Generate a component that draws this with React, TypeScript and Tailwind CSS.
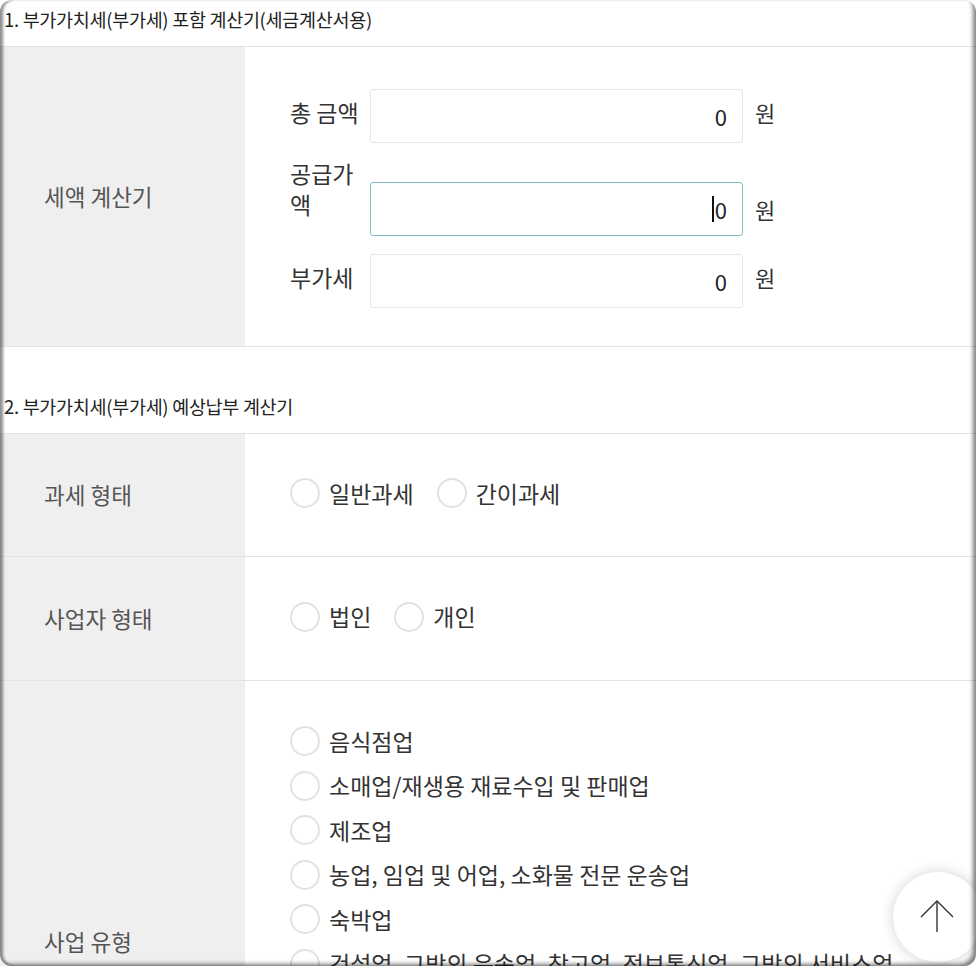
import React from 'react'

const font = { fontFamily: '"Noto Sans CJK KR", "Noto Sans", sans-serif' }

const taxTypes = ['일반과세', '간이과세']
const bizForms = ['법인', '개인']
const industries = [
  '음식점업',
  '소매업/재생용 재료수입 및 판매업',
  '제조업',
  '농업, 임업 및 어업, 소화물 전문 운송업',
  '숙박업',
  '건설업, 그밖의 운송업, 창고업, 정보통신업, 그밖의 서비스업',
  '금융 및 보험 관련 서비스업',
  '전문, 과학 및 기술 서비스업',
  '사업시설관리, 사업지원 및 임대서비스업',
  '부동산 관련 서비스업, 부동산임대업',
]

function Radio({ label }: { label: string }) {
  return (
    <label className="flex items-center gap-[9px] whitespace-nowrap">
      <span className="inline-block h-[30px] w-[30px] shrink-0 rounded-full border-2 border-[#e2e2e2] bg-white" />
      <span className="text-[23px] leading-none text-[#333]">{label}</span>
    </label>
  )
}

function Field({ focused }: { focused?: boolean }) {
  return (
    <div
      className={`flex h-[54px] w-[373px] items-center justify-end rounded-[3px] border bg-white pr-[15px] text-[22px] text-[#222] ${
        focused ? 'border-[#86bcc6]' : 'border-[#e6e6e6]'
      }`}
    >
      {focused && <span className="mr-[1px] inline-block h-[26px] w-[1.5px] bg-[#111]" />}
      <span>0</span>
    </div>
  )
}

function SectionTitle({ children }: { children: React.ReactNode }) {
  return (
    <div className="h-[47px] border-b border-[#e3e3e3] pl-[4px] pt-[6px] text-[18.5px] leading-[27px] tracking-[-0.3px] text-[#222]">
      {children}
    </div>
  )
}

function Row({ label, children, className }: { label: string; children: React.ReactNode; className?: string }) {
  return (
    <div className={`grid grid-cols-[245px_1fr] border-b border-[#e3e3e3] ${className ?? ''}`}>
      <div className="flex items-center bg-[#efefef] pl-[44px] text-[22.5px] text-[#555]">{label}</div>
      <div className="bg-white">{children}</div>
    </div>
  )
}

export default function App() {
  return (
    <div className="relative h-[966px] w-[976px] overflow-hidden bg-white" style={font}>
      <SectionTitle>1. 부가가치세(부가세) 포함 계산기(세금계산서용)</SectionTitle>

      {/* 세액 계산기 */}
      <Row label="세액 계산기" className="h-[300px]">
        <div className="flex flex-col pl-[45px] pt-[42px]">
          <div className="flex items-center">
            <div className="-mt-[8px] w-[80px] text-[23px] leading-[31px] text-[#333]">총 금액</div>
            <Field />
            <span className="-mt-[8px] ml-[12px] text-[22px] text-[#333]">원</span>
          </div>
          <div className="mt-[39px] flex items-center">
            <div className="-mt-[24px] w-[80px] self-start pr-[8px] text-[23px] leading-[31px] text-[#333]">공급가액</div>
            <Field focused />
            <span className="ml-[12px] text-[22px] text-[#333]">원</span>
          </div>
          <div className="mt-[18px] flex items-center">
            <div className="-mt-[8px] w-[80px] text-[23px] leading-[31px] text-[#333]">부가세</div>
            <Field />
            <span className="-mt-[8px] ml-[12px] text-[22px] text-[#333]">원</span>
          </div>
        </div>
      </Row>

      <div className="h-[40px]" />
      <SectionTitle>2. 부가가치세(부가세) 예상납부 계산기</SectionTitle>

      <Row label="과세 형태" className="h-[123px]">
        <div className="flex h-full items-center gap-[23px] pl-[45px] pb-[4px]">
          {taxTypes.map((t) => (
            <Radio key={t} label={t} />
          ))}
        </div>
      </Row>

      <Row label="사업자 형태" className="h-[124px]">
        <div className="flex h-full items-center gap-[23px] pl-[45px] pb-[4px]">
          {bizForms.map((t) => (
            <Radio key={t} label={t} />
          ))}
        </div>
      </Row>

      <Row label="사업 유형">
        <div className="flex flex-col pl-[45px] pt-[38px] pb-[38px]">
          {industries.map((t) => (
            <div key={t} className="flex h-[44.5px] items-center">
              <Radio label={t} />
            </div>
          ))}
        </div>
      </Row>

      {/* scroll-to-top button */}
      <button className="absolute left-[893px] top-[872px] flex h-[90px] w-[90px] items-center justify-center rounded-full bg-white shadow-[0_0_14px_rgba(0,0,0,0.18)]">
        <svg width="40" height="40" viewBox="0 0 40 40" fill="none" stroke="#333" strokeWidth="1.4" className="-ml-[2px] -mt-[2px]">
          <path d="M20 5 V36" />
          <path d="M4 21 L20 5 L36 21" />
        </svg>
      </button>

      {/* window frame edge */}
      <div className="pointer-events-none absolute inset-0 rounded-[12px] shadow-[inset_4px_0_3px_-1px_rgba(0,0,0,0.45),inset_-5px_-4px_4px_-2px_rgba(0,0,0,0.5)]" />
    </div>
  )
}
